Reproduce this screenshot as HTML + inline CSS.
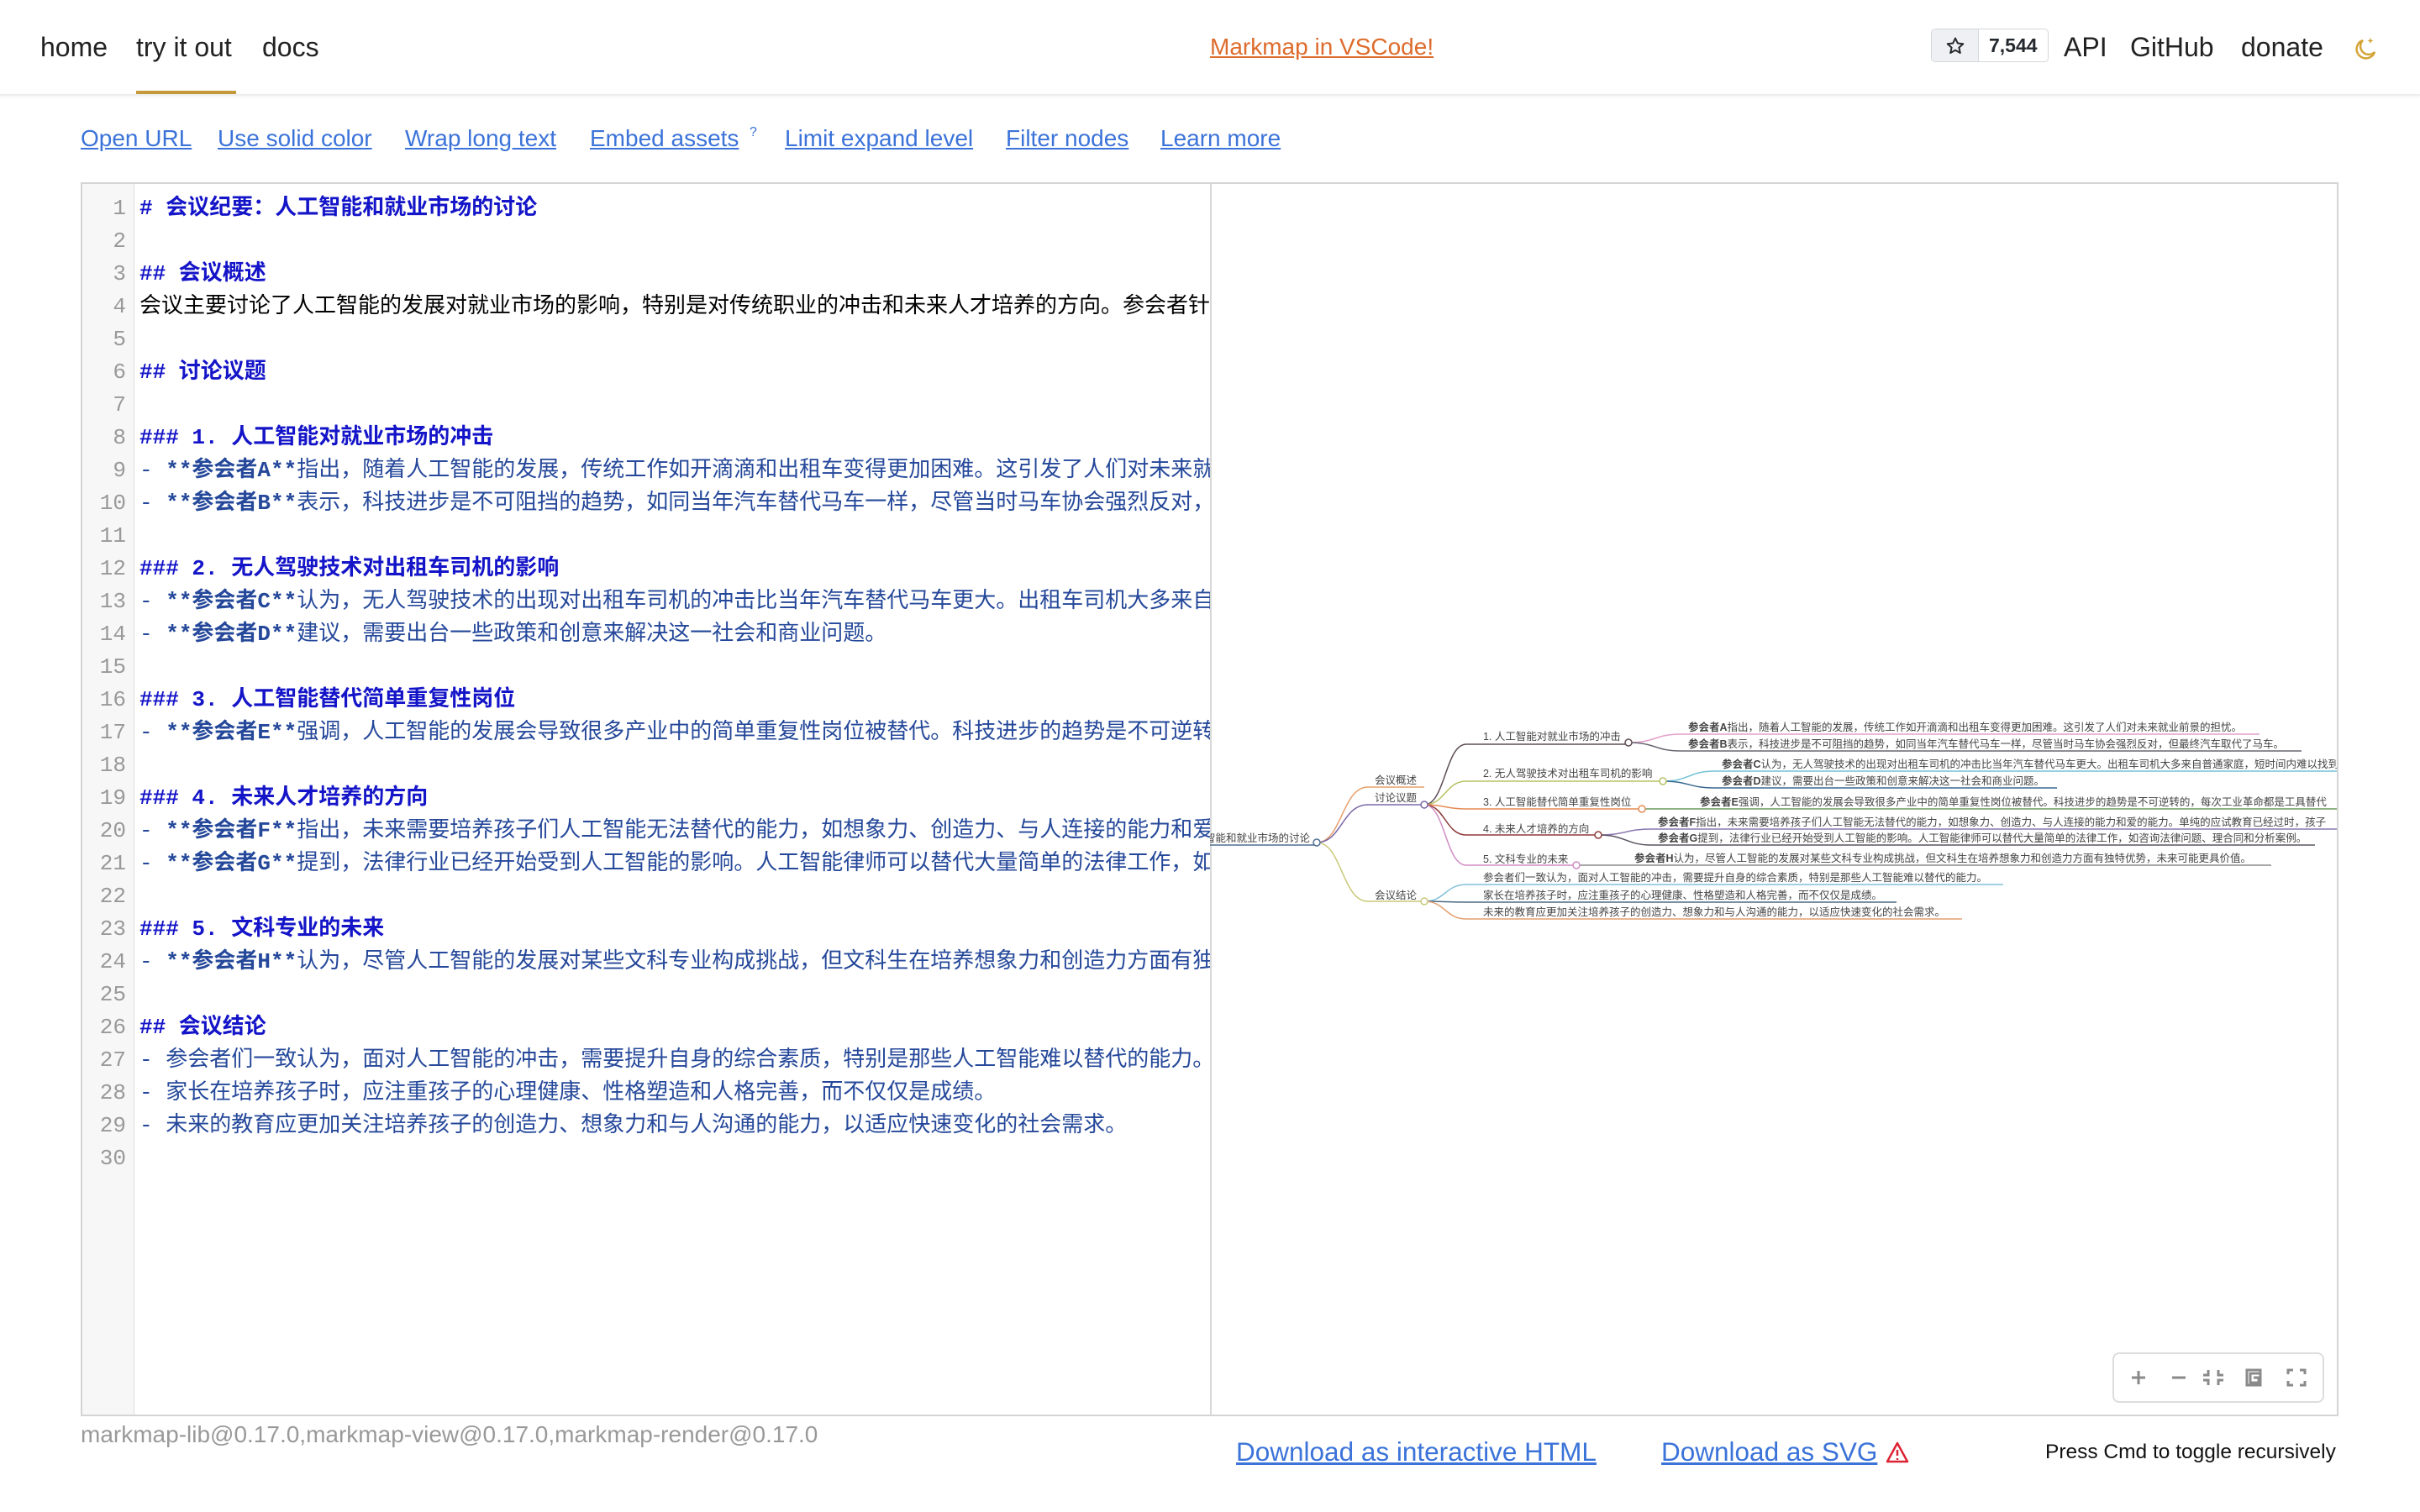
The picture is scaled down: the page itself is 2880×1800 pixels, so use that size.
<!DOCTYPE html>
<html><head><meta charset="utf-8"><style>
*{margin:0;padding:0;box-sizing:border-box}
html,body{width:2880px;height:1800px;overflow:hidden;background:#fff;font-family:"Liberation Sans","Noto Sans CJK SC",sans-serif}
.a{position:absolute;white-space:nowrap}
.nav{font-size:32px;color:#222;top:38px}
.lk{font-size:28px;color:#3b73d9;text-decoration:underline;top:149px}
#ed{position:absolute;left:96px;top:217px;width:2687px;height:1469px;border:2px solid #d4d4d4;overflow:hidden}
#gut{position:absolute;left:0;top:0;width:62px;height:100%;background:#f7f7f7;border-right:1px solid #ddd}
#code{position:absolute;left:0;top:10px;width:1344px;height:100%;overflow:hidden;font-family:"Liberation Mono","Noto Sans CJK SC",monospace;font-size:26px}
.l{height:39px;line-height:39px;white-space:nowrap;position:relative}
.n{position:absolute;left:0;width:52px;text-align:right;color:#999}
.t{position:absolute;left:68px}
.h{color:#1414c8;font-weight:bold}
.li{color:#25489a}
.li b{font-weight:bold}
#div{position:absolute;left:1342px;top:0;width:2px;height:100%;background:#d8d8d8}
</style></head><body>
<div class="a nav" style="left:48px">home</div>
<div class="a nav" style="left:162px">try it out</div>
<div class="a nav" style="left:312px">docs</div>
<div class="a" style="left:162px;top:108px;width:119px;height:5px;background:#c59a3b"></div>
<div class="a" style="left:0;top:112px;width:2880px;height:2px;background:#eee;box-shadow:0 1px 3px rgba(0,0,0,.08)"></div>
<div class="a" style="left:1440px;top:40px;font-size:28px;color:#dd6b2c;text-decoration:underline">Markmap in VSCode!</div>
<div class="a" style="left:2298px;top:34px;width:140px;height:40px;border:1px solid #d5d8dc;border-radius:5px;overflow:hidden">
 <div style="position:absolute;left:0;top:0;width:56px;height:100%;background:#eef0f3;border-right:1px solid #d5d8dc"></div>
 <svg style="position:absolute;left:16px;top:8px" width="24" height="24" viewBox="0 0 24 24"><path d="M12 2.5l2.8 6 6.5.7-4.9 4.4 1.4 6.4L12 16.8 6.2 20l1.4-6.4L2.7 9.2l6.5-.7z" fill="none" stroke="#24292f" stroke-width="2" stroke-linejoin="round"/></svg>
 <div style="position:absolute;left:68px;top:6px;font-size:23px;font-weight:bold;color:#24292f">7,544</div>
</div>
<div class="a nav" style="left:2456px">API</div>
<div class="a nav" style="left:2535px">GitHub</div>
<div class="a nav" style="left:2667px">donate</div>
<svg class="a" style="left:2800px;top:42px" width="30" height="32" viewBox="0 0 30 32"><path d="M12 6a11 11 0 1 0 14 14A9 9 0 0 1 12 6z" fill="none" stroke="#d4a437" stroke-width="2.5"/><path d="M21 3l1 2.5 2.5 1-2.5 1-1 2.5-1-2.5-2.5-1 2.5-1z" fill="#d4a437"/></svg>

<div class="a lk" style="left:96px">Open URL</div>
<div class="a lk" style="left:259px">Use solid color</div>
<div class="a lk" style="left:482px">Wrap long text</div>
<div class="a lk" style="left:702px">Embed assets</div>
<div class="a" style="left:892px;top:149px;font-size:16px;color:#3b73d9">?</div>
<div class="a lk" style="left:934px">Limit expand level</div>
<div class="a lk" style="left:1197px">Filter nodes</div>
<div class="a lk" style="left:1381px">Learn more</div>

<div id="ed">
<div id="gut"></div>
<div id="code">
<div class="l"><span class="n">1</span><span class="t h"># 会议纪要：人工智能和就业市场的讨论</span></div>
<div class="l"><span class="n">2</span></div>
<div class="l"><span class="n">3</span><span class="t h">## 会议概述</span></div>
<div class="l"><span class="n">4</span><span class="t">会议主要讨论了人工智能的发展对就业市场的影响，特别是对传统职业的冲击和未来人才培养的方向。参会者针对</span></div>
<div class="l"><span class="n">5</span></div>
<div class="l"><span class="n">6</span><span class="t h">## 讨论议题</span></div>
<div class="l"><span class="n">7</span></div>
<div class="l"><span class="n">8</span><span class="t h">### 1. 人工智能对就业市场的冲击</span></div>
<div class="l"><span class="n">9</span><span class="t li">- <b>**参会者A**</b>指出，随着人工智能的发展，传统工作如开滴滴和出租车变得更加困难。这引发了人们对未来就业</span></div>
<div class="l"><span class="n">10</span><span class="t li">- <b>**参会者B**</b>表示，科技进步是不可阻挡的趋势，如同当年汽车替代马车一样，尽管当时马车协会强烈反对，但</span></div>
<div class="l"><span class="n">11</span></div>
<div class="l"><span class="n">12</span><span class="t h">### 2. 无人驾驶技术对出租车司机的影响</span></div>
<div class="l"><span class="n">13</span><span class="t li">- <b>**参会者C**</b>认为，无人驾驶技术的出现对出租车司机的冲击比当年汽车替代马车更大。出租车司机大多来自</span></div>
<div class="l"><span class="n">14</span><span class="t li">- <b>**参会者D**</b>建议，需要出台一些政策和创意来解决这一社会和商业问题。</span></div>
<div class="l"><span class="n">15</span></div>
<div class="l"><span class="n">16</span><span class="t h">### 3. 人工智能替代简单重复性岗位</span></div>
<div class="l"><span class="n">17</span><span class="t li">- <b>**参会者E**</b>强调，人工智能的发展会导致很多产业中的简单重复性岗位被替代。科技进步的趋势是不可逆转的</span></div>
<div class="l"><span class="n">18</span></div>
<div class="l"><span class="n">19</span><span class="t h">### 4. 未来人才培养的方向</span></div>
<div class="l"><span class="n">20</span><span class="t li">- <b>**参会者F**</b>指出，未来需要培养孩子们人工智能无法替代的能力，如想象力、创造力、与人连接的能力和爱的</span></div>
<div class="l"><span class="n">21</span><span class="t li">- <b>**参会者G**</b>提到，法律行业已经开始受到人工智能的影响。人工智能律师可以替代大量简单的法律工作，如咨询</span></div>
<div class="l"><span class="n">22</span></div>
<div class="l"><span class="n">23</span><span class="t h">### 5. 文科专业的未来</span></div>
<div class="l"><span class="n">24</span><span class="t li">- <b>**参会者H**</b>认为，尽管人工智能的发展对某些文科专业构成挑战，但文科生在培养想象力和创造力方面有独特</span></div>
<div class="l"><span class="n">25</span></div>
<div class="l"><span class="n">26</span><span class="t h">## 会议结论</span></div>
<div class="l"><span class="n">27</span><span class="t li">- 参会者们一致认为，面对人工智能的冲击，需要提升自身的综合素质，特别是那些人工智能难以替代的能力。</span></div>
<div class="l"><span class="n">28</span><span class="t li">- 家长在培养孩子时，应注重孩子的心理健康、性格塑造和人格完善，而不仅仅是成绩。</span></div>
<div class="l"><span class="n">29</span><span class="t li">- 未来的教育应更加关注培养孩子的创造力、想象力和与人沟通的能力，以适应快速变化的社会需求。</span></div>
<div class="l"><span class="n">30</span></div>
</div>
<div id="div"></div>
</div>

<svg class="a" style="left:1440px;top:219px" width="1341" height="1465" viewBox="1440 219 1341 1465" font-family="Liberation Sans, Noto Sans CJK SC, sans-serif" font-size="12.5" fill="#444">
<g fill="none" stroke-width="1.5">
<path d="M1440 1006H1567" stroke="#4f6f92"/>
<path d="M1567 1003C1597 1003 1597 937 1628 937H1695" stroke="#e8a06a"/>
<path d="M1567 1003C1597 1003 1597 958 1628 958H1695" stroke="#7b68a8"/>
<path d="M1567 1003C1597 1003 1597 1073 1628 1073H1695" stroke="#c9c97a"/>
<path d="M1695 958C1720 958 1720 886 1745 886H1938" stroke="#5e4d55"/>
<path d="M1695 958C1720 958 1720 930 1745 930H1979" stroke="#b7c264"/>
<path d="M1695 958C1720 958 1720 963 1745 963H1954" stroke="#e58a55"/>
<path d="M1695 958C1720 958 1720 994 1745 994H1902" stroke="#8e3a3a"/>
<path d="M1695 958C1720 958 1720 1030 1745 1030H1876" stroke="#d08cc4"/>
<path d="M1938 884C1970 884 1970 874 2000 874H2689" stroke="#e4a0cc"/>
<path d="M1938 884C1970 884 1970 894 2000 894H2739" stroke="#6a6673"/>
<path d="M1979 930C2010 930 2010 918 2040 918H2790" stroke="#72c2d6"/>
<path d="M1979 930C2010 930 2010 938 2040 938H2448" stroke="#3a6a92"/>
<path d="M1954 963H2790" stroke="#6c9a5e"/>
<path d="M1902 994C1935 994 1935 987 1965 987H2790" stroke="#8a78b0"/>
<path d="M1902 994C1935 994 1935 1006 1965 1006H2755" stroke="#5b5362"/>
<path d="M1876 1030H2703" stroke="#8c8c8c"/>
<path d="M1695 1073C1720 1073 1720 1053 1745 1053H2384" stroke="#80c0d8"/>
<path d="M1695 1073C1720 1073 1720 1074 1745 1074H2257" stroke="#4a6a82"/>
<path d="M1695 1073C1720 1073 1720 1094 1745 1094H2335" stroke="#e3a070"/>
</g>
<g fill="#fff" stroke-width="1.5">
<circle cx="1567" cy="1003" r="4" stroke="#4f6f92"/>
<circle cx="1695" cy="958" r="4" stroke="#7b68a8"/>
<circle cx="1695" cy="1073" r="4" stroke="#c9c97a"/>
<circle cx="1938" cy="884" r="4" stroke="#5e4d55"/>
<circle cx="1979" cy="930" r="4" stroke="#b7c264"/>
<circle cx="1954" cy="963" r="4" stroke="#e58a55"/>
<circle cx="1902" cy="994" r="4" stroke="#8e3a3a"/>
<circle cx="1876" cy="1030" r="4" stroke="#d08cc4"/>
</g>
<text x="1559" y="1002" text-anchor="end">人工智能和就业市场的讨论</text>
<text x="1636" y="933">会议概述</text>
<text x="1636" y="954">讨论议题</text>
<text x="1636" y="1070">会议结论</text>
<text x="1765" y="881">1. 人工智能对就业市场的冲击</text>
<text x="1765" y="925">2. 无人驾驶技术对出租车司机的影响</text>
<text x="1765" y="959">3. 人工智能替代简单重复性岗位</text>
<text x="1765" y="991">4. 未来人才培养的方向</text>
<text x="1765" y="1027">5. 文科专业的未来</text>
<text x="2009" y="870"><tspan font-weight="bold">参会者A</tspan>指出，随着人工智能的发展，传统工作如开滴滴和出租车变得更加困难。这引发了人们对未来就业前景的担忧。</text>
<text x="2009" y="890"><tspan font-weight="bold">参会者B</tspan>表示，科技进步是不可阻挡的趋势，如同当年汽车替代马车一样，尽管当时马车协会强烈反对，但最终汽车取代了马车。</text>
<text x="2049" y="914"><tspan font-weight="bold">参会者C</tspan>认为，无人驾驶技术的出现对出租车司机的冲击比当年汽车替代马车更大。出租车司机大多来自普通家庭，短时间内难以找到</text>
<text x="2049" y="934"><tspan font-weight="bold">参会者D</tspan>建议，需要出台一些政策和创意来解决这一社会和商业问题。</text>
<text x="2023" y="959"><tspan font-weight="bold">参会者E</tspan>强调，人工智能的发展会导致很多产业中的简单重复性岗位被替代。科技进步的趋势是不可逆转的，每次工业革命都是工具替代</text>
<text x="1973" y="983"><tspan font-weight="bold">参会者F</tspan>指出，未来需要培养孩子们人工智能无法替代的能力，如想象力、创造力、与人连接的能力和爱的能力。单纯的应试教育已经过时，孩子</text>
<text x="1973" y="1002"><tspan font-weight="bold">参会者G</tspan>提到，法律行业已经开始受到人工智能的影响。人工智能律师可以替代大量简单的法律工作，如咨询法律问题、理合同和分析案例。</text>
<text x="1945" y="1026"><tspan font-weight="bold">参会者H</tspan>认为，尽管人工智能的发展对某些文科专业构成挑战，但文科生在培养想象力和创造力方面有独特优势，未来可能更具价值。</text>
<text x="1765" y="1049">参会者们一致认为，面对人工智能的冲击，需要提升自身的综合素质，特别是那些人工智能难以替代的能力。</text>
<text x="1765" y="1070">家长在培养孩子时，应注重孩子的心理健康、性格塑造和人格完善，而不仅仅是成绩。</text>
<text x="1765" y="1090">未来的教育应更加关注培养孩子的创造力、想象力和与人沟通的能力，以适应快速变化的社会需求。</text>
</svg>

<div class="a" style="left:2514px;top:1610px;width:252px;height:60px;border:2px solid #ddd;border-radius:8px;background:#fff">
<svg width="248" height="56" viewBox="0 0 248 56" fill="none" stroke="#8a8a8a" stroke-width="3">
<path d="M29 20v16M21 28h16"/>
<path d="M69 28h16"/>
<path d="M112 19v6h-6M124 19v6h6M112 37v-6h-6M124 37v-6h6"/>
<path d="M158 19h16v18h-16zM166 28h6v6h-10v-11h12" stroke-width="3"/>
<path d="M207 24v-5h6M221 19h6v5M207 32v5h6M221 37h6v-5"/>
</svg></div>

<div class="a" style="left:96px;top:1692px;font-size:28px;color:#999">markmap-lib@0.17.0,markmap-view@0.17.0,markmap-render@0.17.0</div>
<div class="a" style="left:1471px;top:1710px;font-size:31.5px;color:#3b73d9;text-decoration:underline">Download as interactive HTML</div>
<div class="a" style="left:1977px;top:1710px;font-size:31.5px;color:#3b73d9;text-decoration:underline">Download as SVG</div>
<svg class="a" style="left:2244px;top:1715px" width="28" height="28" viewBox="0 0 28 28"><path d="M14 3L26 25H2z" fill="none" stroke="#d23" stroke-width="2.5" stroke-linejoin="round"/><path d="M14 11v7M14 21v2" stroke="#d23" stroke-width="2.5"/></svg>
<div class="a" style="left:2434px;top:1715px;font-size:24.5px;color:#111">Press Cmd to toggle recursively</div>
</body></html>
